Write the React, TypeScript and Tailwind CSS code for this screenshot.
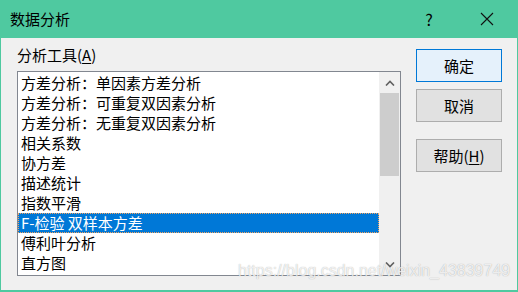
import React from "react";

const items = [
  "方差分析：单因素方差分析",
  "方差分析：可重复双因素分析",
  "方差分析：无重复双因素分析",
  "相关系数",
  "协方差",
  "描述统计",
  "指数平滑",
  "F-检验 双样本方差",
  "傅利叶分析",
  "直方图",
];

const font = { fontFamily: '"Noto Sans CJK SC", "Noto Sans", sans-serif' };

export default function App() {
  return (
    <div
      className="relative w-[518px] h-[292px] flex flex-col bg-[#4fc9a0] overflow-hidden text-black"
      style={font}
    >
      {/* title bar */}
      <div className="h-[38px] flex items-center shrink-0">
        <div className="pl-[10px] text-[15px] leading-[20px] flex-1">数据分析</div>
        <div className="w-[46px] text-center text-[16px] leading-[20px] mr-[12px]">?</div>
        <div className="w-[46px] flex justify-center mr-[8px]">
          <svg width="14" height="14" viewBox="0 0 14 14">
            <path d="M1 1 L13 13 M13 1 L1 13" stroke="#111" strokeWidth="1.1" fill="none" />
          </svg>
        </div>
      </div>
      {/* body */}
      <div className="flex-1 mx-[1px] mb-[2px] bg-[#f0f0f0] flex">
        <div className="pl-[16px] pt-[7px] flex flex-col">
          <div className="text-[15px] leading-[20px] h-[20px]">
            分析工具(<span className="underline underline-offset-2">A</span>)
          </div>
          <div className="mt-[6px] w-[384px] h-[205px] border border-[#828790] bg-white flex">
            <div className="w-[361px] pt-[1px] overflow-hidden">
              {items.map((t, i) =>
                i === 7 ? (
                  <div
                    key={i}
                    className="h-[20px] pl-[3px] text-[15px] leading-[20px] whitespace-nowrap bg-[#0078d7] text-white border border-dotted border-[#f4a460] -my-0"
                    style={{ lineHeight: "18px", paddingLeft: "2px" }}
                  >
                    {t}
                  </div>
                ) : (
                  <div
                    key={i}
                    className="h-[20px] pl-[3px] text-[15px] leading-[20px] whitespace-nowrap"
                  >
                    {t}
                  </div>
                )
              )}
            </div>
            <div className="w-[21px] bg-[#f0f0f0] flex flex-col items-center">
              <div className="h-[21px] w-full flex items-center justify-center">
                <svg width="10" height="6" viewBox="0 0 10 6">
                  <path d="M1 5.5 L5 1.5 L9 5.5" stroke="#606060" strokeWidth="1.6" fill="none" />
                </svg>
              </div>
              <div className="w-[19px] h-[83px] bg-[#cdcdcd]" />
              <div className="flex-1" />
              <div className="h-[21px] w-full flex items-center justify-center">
                <svg width="10" height="6" viewBox="0 0 10 6">
                  <path d="M1 0.5 L5 4.5 L9 0.5" stroke="#606060" strokeWidth="1.6" fill="none" />
                </svg>
              </div>
            </div>
          </div>
        </div>
        <div className="ml-[15px] pt-[11px] flex flex-col">
          <button className="w-[86px] h-[33px] border border-[#0078d7] bg-[#e5f1fb] text-[15px] leading-[20px]">
            确定
          </button>
          <button className="mt-[7px] w-[86px] h-[33px] border border-[#adadad] bg-[#e1e1e1] text-[15px] leading-[20px]">
            取消
          </button>
          <button className="mt-[17px] w-[86px] h-[33px] border border-[#adadad] bg-[#e1e1e1] text-[15px] leading-[20px]">
            帮助(<span className="underline underline-offset-2">H</span>)
          </button>
        </div>
      </div>
      <div
        className="absolute left-[238px] top-[262px] text-[16px] leading-[18px] text-white/80 whitespace-nowrap"
        style={{ fontFamily: '"Liberation Sans", Arial, sans-serif', textShadow: "0 0 1px rgba(0,0,0,0.35)" }}
      >
        https://blog.csdn.net/weixin_43839749
      </div>
    </div>
  );
}
